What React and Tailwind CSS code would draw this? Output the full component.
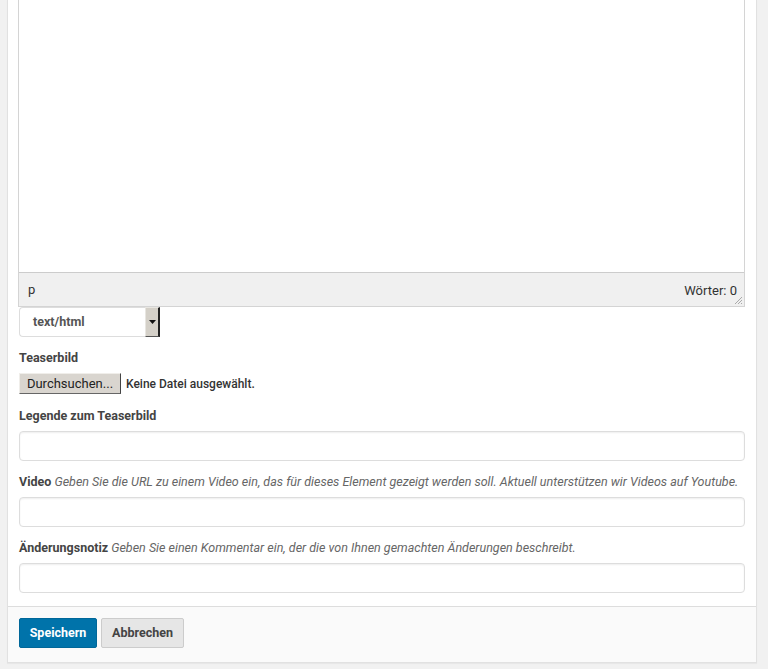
import React from "react";

const Label = ({ title, hint }) => (
  <div className="text-[12.5px] leading-4 text-[#444]">
    <span className="font-bold">{title}</span>
    {hint && <span className="italic text-[#666]"> {hint}</span>}
  </div>
);

const TextInput = () => (
  <input
    type="text"
    className="mt-[7px] block h-[30px] w-full rounded-[4px] border border-[#ddd] bg-white px-2 text-[13px] shadow-[inset_0_1px_2px_rgba(0,0,0,0.07)] outline-none"
  />
);

export default function App() {
  return (
    <div
      className="h-[669px] w-[768px] overflow-hidden bg-[#f1f1f1] pl-[7px]"
      style={{ fontFamily: "Roboto, 'Liberation Sans', sans-serif" }}
    >
      <div className="w-[750px] border-x border-b border-[#e1e1e1] bg-white shadow-[0_1px_1px_rgba(0,0,0,0.04)]">
        <div className="pl-[11px] pr-[11px]">
          {/* EDITOR */}
          <div className="-ml-px border-x border-b border-[#d4d4d4]">
            <div className="h-[272px] bg-white" />
            <div className="relative flex h-[34px] items-center justify-between border-t border-[#ccc] bg-[#f0f0f0] pl-[9px] pr-[7px] text-[13px] text-[#333]">
              <span>p</span>
              <span className="mt-[2px]">Wörter: 0</span>
              <svg className="absolute bottom-[1px] right-[1px]" width="10" height="10" viewBox="0 0 10 10">
                <path d="M9 2L2 9M9 5L5 9M9 8L8 9" stroke="#aaa" strokeWidth="1" />
              </svg>
            </div>
          </div>

          {/* FORMAT SELECT */}
          <div className="flex h-[30px] w-[141px] items-stretch">
            <div className="flex flex-1 items-center rounded-l-[4px] border border-r-0 border-[#ddd] bg-white pl-[13px] text-[12.5px] font-bold text-[#555]">
              text/html
            </div>
            <div className="flex w-[15px] items-center justify-center border-t border-l border-t-[#e8e6e1] border-l-[#e8e6e1] border-r-2 border-b border-r-[#222] border-b-[#555] bg-[#d4d0c8]">
              <svg width="7" height="4" viewBox="0 0 7 4">
                <path d="M0 0h7L3.5 4z" fill="#111" />
              </svg>
            </div>
          </div>

          {/* TEASERBILD */}
          <div className="mt-[13px]">
            <Label title="Teaserbild" />
            <div className="mt-[7px] flex items-center">
              <div className="flex h-[21px] w-[102px] items-center justify-center border-t border-l border-t-[#f0eeea] border-l-[#f0eeea] border-r border-b border-r-[#444] border-b-[#666] bg-[#d9d5cf] text-[13px] text-[#222]">
                Durchsuchen...
              </div>
              <span className="ml-[5px] text-[12px] font-medium text-[#333]">
                Keine Datei ausgewählt.
              </span>
            </div>
          </div>

          <div className="mt-[14px]">
            <Label title="Legende zum Teaserbild" />
            <TextInput />
          </div>

          <div className="mt-[13px]">
            <Label
              title="Video"
              hint="Geben Sie die URL zu einem Video ein, das für dieses Element gezeigt werden soll. Aktuell unterstützen wir Videos auf Youtube."
            />
            <TextInput />
          </div>

          <div className="mt-[13px] pb-[13px]">
            <Label
              title="Änderungsnotiz"
              hint="Geben Sie einen Kommentar ein, der die von Ihnen gemachten Änderungen beschreibt."
            />
            <TextInput />
          </div>
        </div>

        {/* FOOTER */}
        <div className="flex gap-[4px] border-t border-[#ddd] bg-[#fafafa] pt-[11px] pb-[14px] pl-[11px]">
          <button className="h-[30px] w-[78px] rounded-[2px] border border-[#006799] bg-[#0073aa] text-[12.5px] font-bold text-white">
            Speichern
          </button>
          <button className="h-[30px] w-[83px] rounded-[2px] border border-[#ccc] bg-[#e6e6e6] text-[12.5px] font-bold text-[#444]">
            Abbrechen
          </button>
        </div>
      </div>
    </div>
  );
}
